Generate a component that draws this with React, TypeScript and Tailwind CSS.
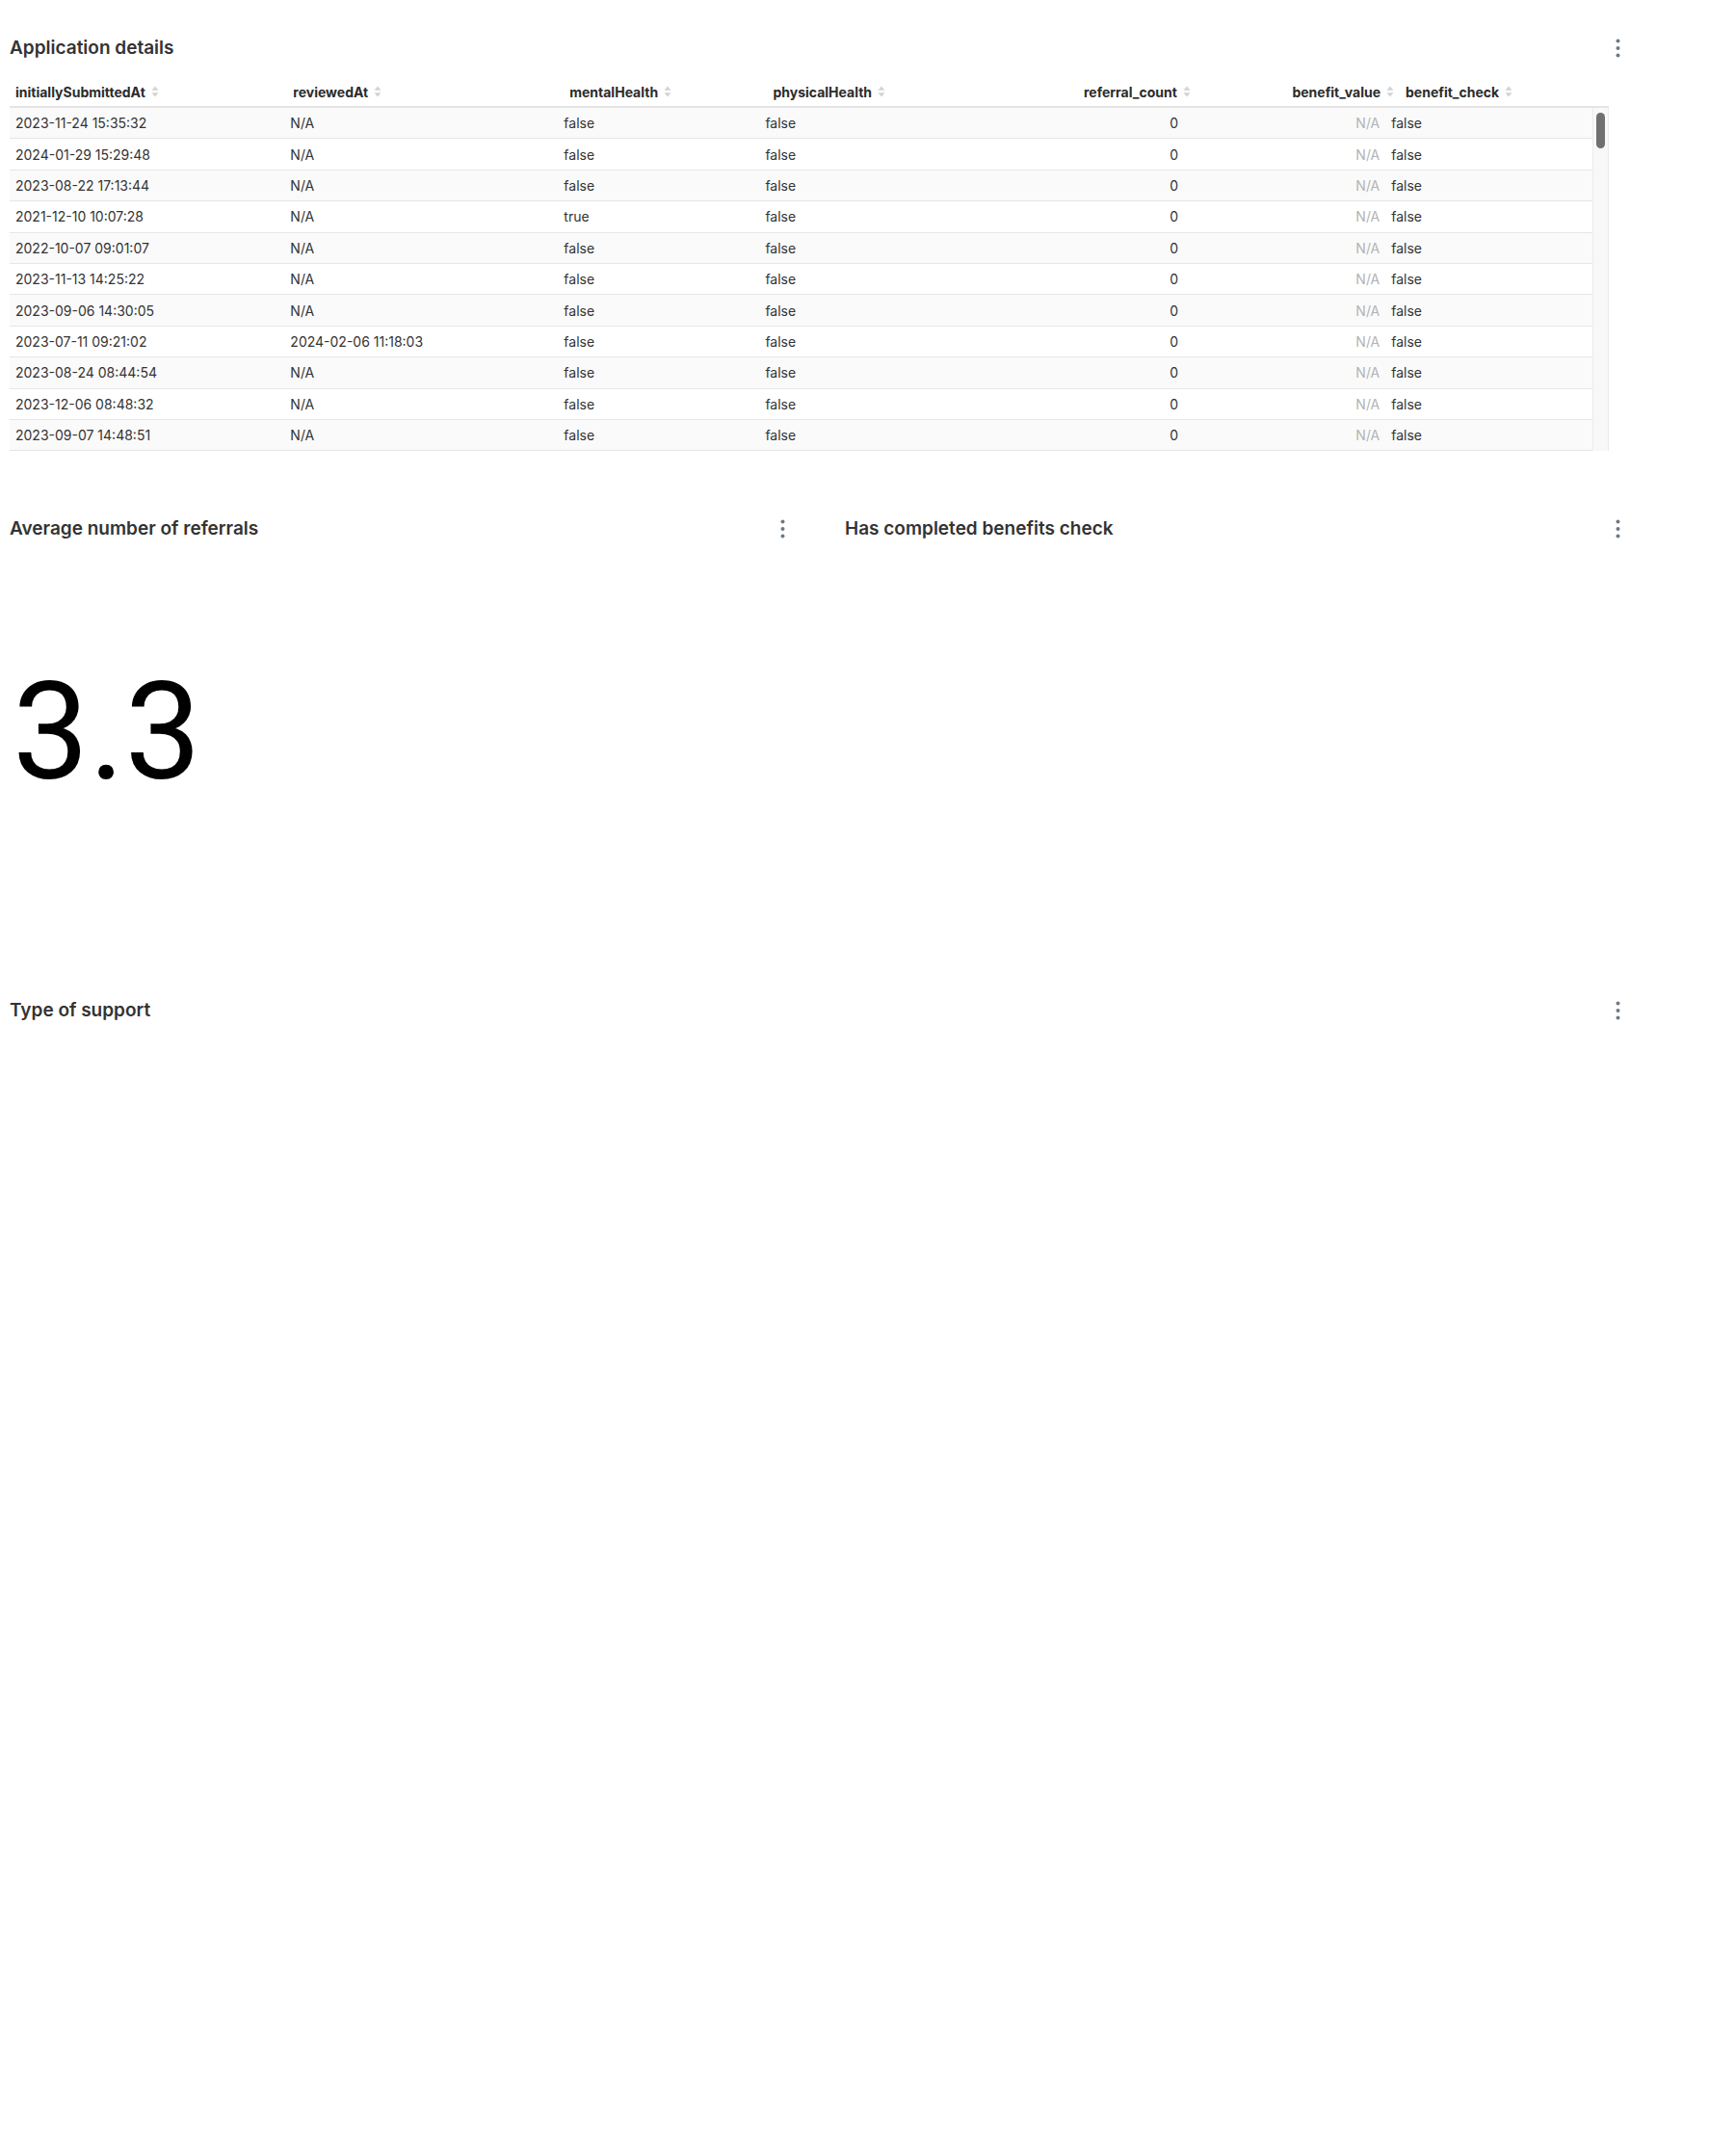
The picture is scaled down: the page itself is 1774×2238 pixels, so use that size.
import React from "react";

type Row = {
  submitted: string;
  reviewed: string;
  mental: string;
  physical: string;
};

const rows: Row[] = [
  { submitted: "2023-11-24 15:35:32", reviewed: "N/A", mental: "false", physical: "false" },
  { submitted: "2024-01-29 15:29:48", reviewed: "N/A", mental: "false", physical: "false" },
  { submitted: "2023-08-22 17:13:44", reviewed: "N/A", mental: "false", physical: "false" },
  { submitted: "2021-12-10 10:07:28", reviewed: "N/A", mental: "true", physical: "false" },
  { submitted: "2022-10-07 09:01:07", reviewed: "N/A", mental: "false", physical: "false" },
  { submitted: "2023-11-13 14:25:22", reviewed: "N/A", mental: "false", physical: "false" },
  { submitted: "2023-09-06 14:30:05", reviewed: "N/A", mental: "false", physical: "false" },
  { submitted: "2023-07-11 09:21:02", reviewed: "2024-02-06 11:18:03", mental: "false", physical: "false" },
  { submitted: "2023-08-24 08:44:54", reviewed: "N/A", mental: "false", physical: "false" },
  { submitted: "2023-12-06 08:48:32", reviewed: "N/A", mental: "false", physical: "false" },
  { submitted: "2023-09-07 14:48:51", reviewed: "N/A", mental: "false", physical: "false" },
];

function Kebab() {
  return (
    <button className="w-[24px] h-[24px] flex items-center justify-center">
      <svg width="5" height="20" viewBox="0 0 5 20" fill="#6c7a86">
        <circle cx="2.5" cy="2.5" r="2" />
        <circle cx="2.5" cy="10" r="2" />
        <circle cx="2.5" cy="17.5" r="2" />
      </svg>
    </button>
  );
}

function SortIcon() {
  return (
    <svg width="8" height="12" viewBox="0 0 8 12" fill="#d3d3d3" className="ml-[6px] shrink-0">
      <path d="M4 0.5 L7.5 4.8 L0.5 4.8 Z" />
      <path d="M4 11.5 L7.5 7.2 L0.5 7.2 Z" />
    </svg>
  );
}

function PanelTitle({ title }: { title: string }) {
  return (
    <div className="h-[28px] flex items-center justify-between">
      <h2 className="text-[19px] font-semibold text-[#333]">{title}</h2>
      <Kebab />
    </div>
  );
}

const cols = "grid grid-cols-[202fr_201fr_148fr_148fr_164fr_148fr_152fr]";

function HeaderCell({ label, right }: { label: string; right?: boolean }) {
  return (
    <div className={"flex items-center px-[6px] " + (right ? "justify-end" : "")}>
      <span>{label}</span>
      <SortIcon />
    </div>
  );
}

function ApplicationTable() {
  return (
    <div className="w-[1660px] mt-[16px] text-[14px]">
      <div className={cols + " h-[32px] border-b-2 border-[#e4e4e4] font-bold text-[#2b2b2b]"}>
        <HeaderCell label="initiallySubmittedAt" />
        <HeaderCell label="reviewedAt" />
        <HeaderCell label="mentalHealth" />
        <HeaderCell label="physicalHealth" />
        <HeaderCell label="referral_count" right />
        <HeaderCell label="benefit_value" right />
        <HeaderCell label="benefit_check" />
      </div>
      <div className="flex h-[356px] overflow-hidden">
        <div className="flex-1">
          {rows.map((r, i) => (
            <div
              key={i}
              className={
                cols +
                " h-[32.4px] items-center border-b border-[#e6e6e6] text-[#333] " +
                (i % 2 === 0 ? "bg-[#fafafa]" : "bg-white")
              }
            >
              <div className="px-[6px]">{r.submitted}</div>
              <div className="px-[6px]">{r.reviewed}</div>
              <div className="px-[6px]">{r.mental}</div>
              <div className="px-[6px]">{r.physical}</div>
              <div className="px-[6px] text-right">0</div>
              <div className="px-[6px] text-right text-[#b3b3b3]">N/A</div>
              <div className="px-[6px]">false</div>
            </div>
          ))}
        </div>
        <div className="w-[17px] bg-[#f8f8f8] border-l border-r border-[#ececec] flex justify-center">
          <div className="w-[9px] h-[37px] mt-[5px] rounded-full bg-[#707070]" />
        </div>
      </div>
    </div>
  );
}

export default function App() {
  return (
    <div className="w-[1702px] min-h-[2238px] bg-white font-[Inter,sans-serif] text-[#333]">
      <div className="flex flex-col gap-[30px]">
        <section className="h-[470px] pl-[10px] pr-[11px] pt-[36px] flex flex-col">
          <PanelTitle title="Application details" />
          <ApplicationTable />
        </section>

        <div className="grid grid-cols-2 gap-[32px]">
          <section className="h-[470px] pl-[10px] pr-[11px] pt-[35px] flex flex-col">
            <PanelTitle title="Average number of referrals" />
            <div className="flex-1 flex items-center pb-[14px]">
              <span className="font-[Roboto,sans-serif] text-[141px] leading-none text-black pl-[3px]">3.3</span>
            </div>
          </section>
          <section className="h-[470px] pl-[10px] pr-[11px] pt-[35px] flex flex-col">
            <PanelTitle title="Has completed benefits check" />
          </section>
        </div>

        <section className="h-[1200px] pl-[10px] pr-[11px] pt-[35px] flex flex-col">
          <PanelTitle title="Type of support" />
        </section>
      </div>
    </div>
  );
}
